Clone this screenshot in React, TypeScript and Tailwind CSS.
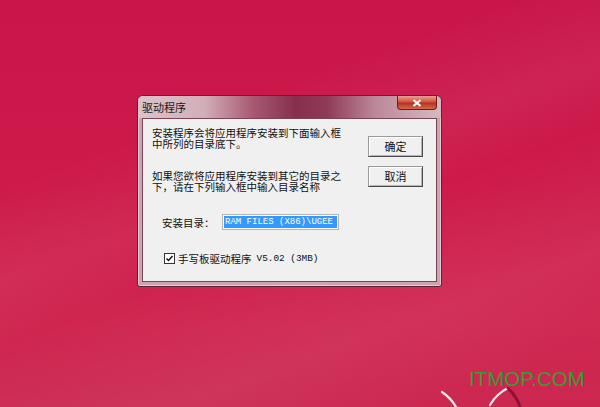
const cjk = "font-['Noto_Sans_CJK_SC','Noto_Sans',sans-serif]";

function DesktopSwirls() {
  return (
    <svg className="absolute left-[436px] top-[372px]" width="100" height="35" viewBox="0 0 100 35">
      <path d="M6 20 C12 24 16 28 20 35" stroke="#fbe9ee" strokeWidth="2.2" fill="none" strokeLinecap="round" />
      <path d="M54 33 C58 26 64 20 72 16" stroke="#fbe9ee" strokeWidth="2.2" fill="none" strokeLinecap="round" />
      <path d="M72 16 C78 22 82 28 84 35" stroke="#8e1232" strokeWidth="3" fill="none" strokeLinecap="round" />
    </svg>
  );
}

function ClassicButton({ label }: { label: string }) {
  return (
    <button
      className={`h-[21px] w-[55px] bg-[#f0f0f0] border border-[#9a9a9a] border-r-[#4a4a4a] border-b-[#4a4a4a] shadow-[inset_1px_1px_0_#ffffff,inset_-1px_-1px_0_#b4b4b4] text-[11px] leading-none text-[#111] ${cjk}`}
    >
      {label}
    </button>
  );
}

function CheckBox() {
  return (
    <span className="flex h-[11px] w-[11px] items-center justify-center border border-[#333] bg-white">
      <svg width="9" height="9" viewBox="0 0 9 9">
        <path d="M1.5 4.5 L3.5 6.5 L7.5 2" stroke="#111" strokeWidth="1.5" fill="none" />
      </svg>
    </span>
  );
}

export default function App() {
  return (
    <div
      className="relative h-[407px] w-[600px] overflow-hidden pl-[137px] pt-[95px] bg-[linear-gradient(160deg,rgba(255,255,255,0)_30%,rgba(255,255,255,0.05)_45%,rgba(255,255,255,0)_55%,rgba(255,255,255,0.06)_75%,rgba(255,255,255,0)_90%),linear-gradient(180deg,#c9164a_0%,#cd1a4a_45%,#cf2650_80%,#cb2850_100%)]"
    >
      {/* installer dialog */}
      <div className="flex h-[192px] w-[305px] flex-col rounded-t-[6px] rounded-b-[3px] border border-[#5b2535] bg-[#c9a5af] shadow-[inset_0_0_0_1px_rgba(255,255,255,0.45)]">
        <div className="flex h-[22px] items-start rounded-t-[5px] bg-[linear-gradient(90deg,#dcc3ca_0%,#d2aeb8_22%,#a85872_38%,#86304d_52%,#8e3956_62%,#bb8798_78%,#d6b9c1_100%)] pl-[4px] pr-[4px]">
          <span className={`mt-[6px] text-[11px] leading-none text-[#1a1a1a] ${cjk}`}>驱动程序</span>
          <div className="ml-auto flex h-[14px] w-[40px] items-center justify-center rounded-b-[4px] border border-t-0 border-[#6e1c1c] bg-[linear-gradient(180deg,#e8a092_0%,#d0553f_45%,#b8321f_55%,#d26a4f_100%)]">
            <svg width="10" height="8" viewBox="0 0 10 8">
              <path d="M1.5 1 L8.5 7 M8.5 1 L1.5 7" stroke="#ffffff" strokeWidth="2.2" />
            </svg>
          </div>
        </div>

        <div className="mx-[4px] mb-[4px] flex flex-1 border border-[#7a4556] bg-[#f0f0f0]">
          <div className={`flex flex-1 flex-col pl-[9px] pt-[8px] text-[10.5px] leading-[11px] text-[#111] ${cjk}`}>
            <p>
              安装程序会将应用程序安装到下面输入框
              <br />
              中所列的目录底下。
            </p>
            <p className="mt-[21px]">
              如果您欲将应用程序安装到其它的目录之
              <br />
              下，请在下列输入框中输入目录名称
            </p>
            <div className="mt-[22px] flex items-center pl-[10px]">
              <span className="w-[60px]">安装目录：</span>
              <div className="flex h-[16px] w-[117px] items-center overflow-hidden border border-[#b5b5b5] bg-white p-[1px]">
                <span className="flex h-full w-full items-center whitespace-nowrap bg-[#3399ff] pl-[1px] font-['Liberation_Mono',monospace] text-[9px] leading-none text-white">
                  RAM FILES (X86)\UGEE
                </span>
              </div>
            </div>
            <div className="mt-[23px] flex items-center pl-[12px]">
              <CheckBox />
              <span className="ml-[3px]">手写板驱动程序</span>
              <span className="ml-[5px] font-['Liberation_Mono',monospace] text-[9.4px]">V5.02 (3MB)</span>
            </div>
          </div>
          <div className="mr-[13px] flex flex-col gap-[9px] pt-[17px]">
            <ClassicButton label="确定" />
            <ClassicButton label="取消" />
          </div>
        </div>
      </div>

      <DesktopSwirls />
      <span className="absolute left-[469px] top-[369px] font-['Liberation_Sans',sans-serif] text-[20.5px] leading-none text-[#3e9a30]">
        ITMOP.COM
      </span>
    </div>
  );
}
